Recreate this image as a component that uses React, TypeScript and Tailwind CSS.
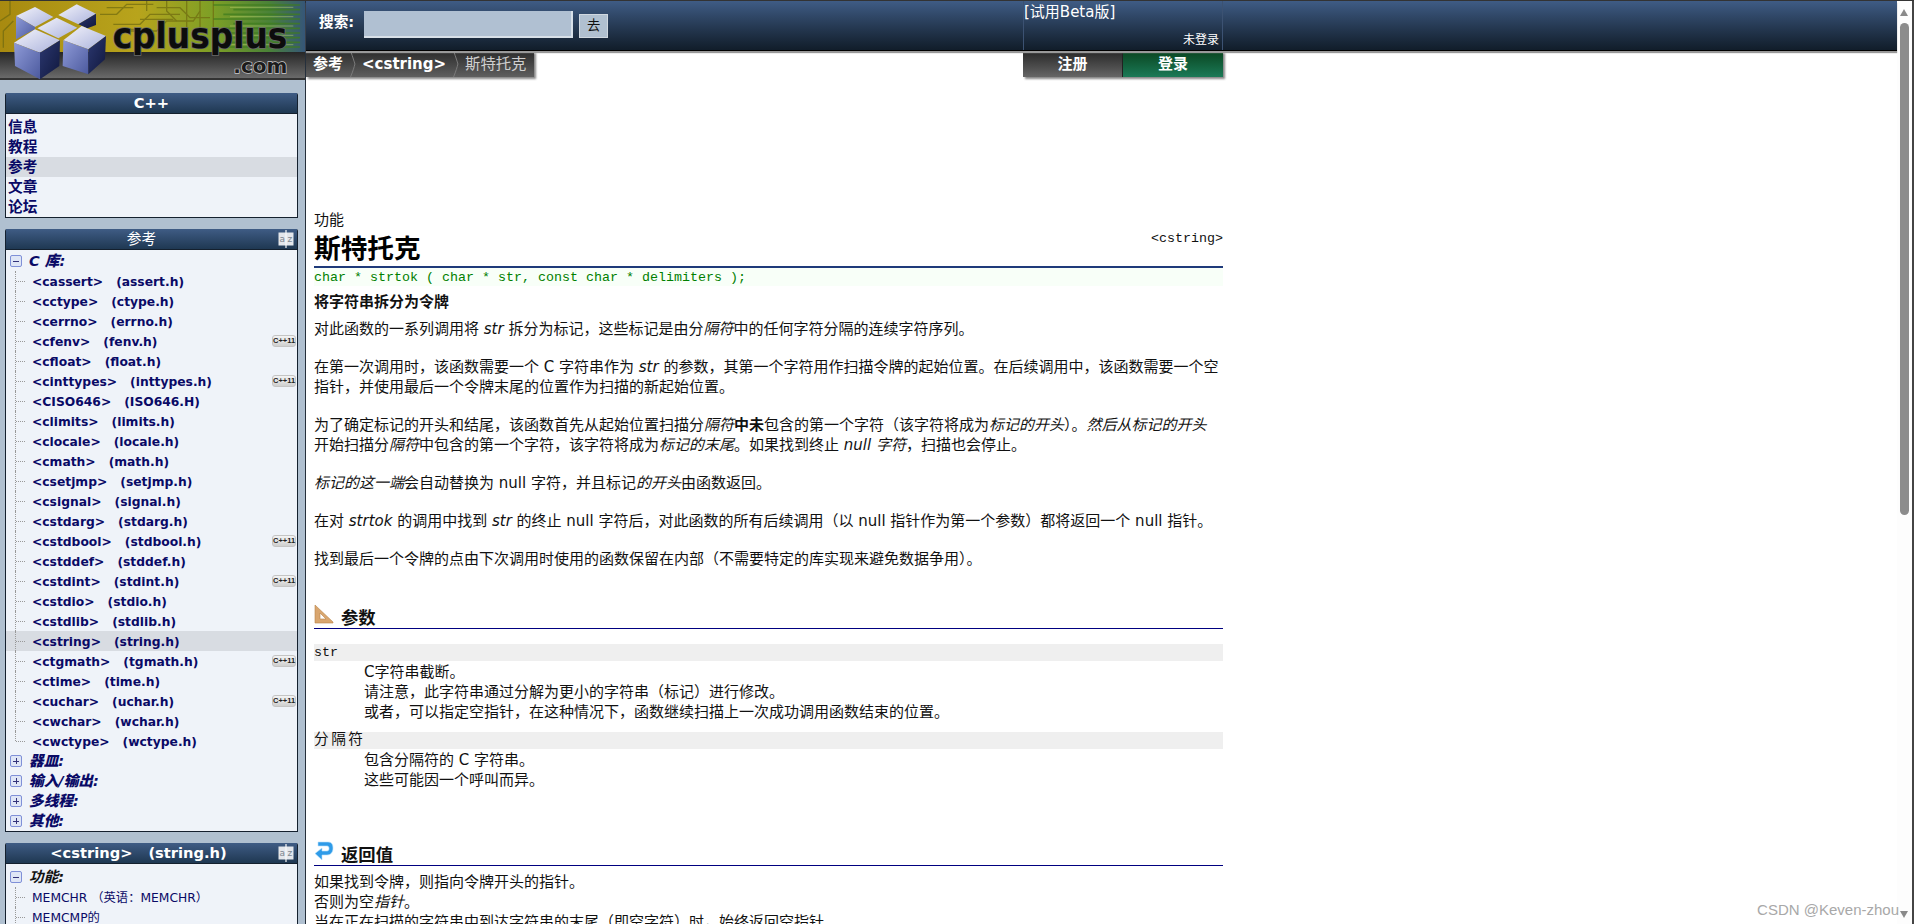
import React from "react";

const cjk = "font-['DejaVu_Sans','Noto_Sans_CJK_SC',sans-serif]";
const mono = "font-['Liberation_Mono','Noto_Sans_CJK_SC',monospace]";

const libs: [string, string, boolean?][] = [
  ["<cassert>", "(assert.h)"],
  ["<cctype>", "(ctype.h)"],
  ["<cerrno>", "(errno.h)"],
  ["<cfenv>", "(fenv.h)", true],
  ["<cfloat>", "(float.h)"],
  ["<cinttypes>", "(inttypes.h)", true],
  ["<CISO646>", "(ISO646.H)"],
  ["<climits>", "(limits.h)"],
  ["<clocale>", "(locale.h)"],
  ["<cmath>", "(math.h)"],
  ["<csetjmp>", "(setjmp.h)"],
  ["<csignal>", "(signal.h)"],
  ["<cstdarg>", "(stdarg.h)"],
  ["<cstdbool>", "(stdbool.h)", true],
  ["<cstddef>", "(stddef.h)"],
  ["<cstdint>", "(stdint.h)", true],
  ["<cstdio>", "(stdio.h)"],
  ["<cstdlib>", "(stdlib.h)"],
  ["<cstring>", "(string.h)"],
  ["<ctgmath>", "(tgmath.h)", true],
  ["<ctime>", "(time.h)"],
  ["<cuchar>", "(uchar.h)", true],
  ["<cwchar>", "(wchar.h)"],
  ["<cwctype>", "(wctype.h)"],
];

const LogoArt = () => (
  <svg viewBox="0 0 918 237" className="block w-[306px] h-[79px]">
    <defs>
      <linearGradient id="pcb" x1="0" x2="1" y1="0" y2="0">
        <stop offset="0" stopColor="#a88a10" />
        <stop offset="0.45" stopColor="#b8a41c" />
        <stop offset="0.7" stopColor="#7c9f26" />
        <stop offset="0.88" stopColor="#4a8238" />
        <stop offset="1" stopColor="#35557a" />
      </linearGradient>
      <linearGradient id="bar" x1="0" x2="0" y1="0" y2="1">
        <stop offset="0" stopColor="#262626" />
        <stop offset="1" stopColor="#6a6a6a" />
      </linearGradient>
      <linearGradient id="top" x1="0" x2="1" y1="0" y2="1">
        <stop offset="0" stopColor="#f4f4fb" />
        <stop offset="1" stopColor="#aab2dc" />
      </linearGradient>
      <linearGradient id="left" x1="0" x2="1" y1="0" y2="1">
        <stop offset="0" stopColor="#8f9bd8" />
        <stop offset="1" stopColor="#4c5a9e" />
      </linearGradient>
      <linearGradient id="right" x1="0" x2="1" y1="0" y2="1">
        <stop offset="0" stopColor="#2c3870" />
        <stop offset="1" stopColor="#10183e" />
      </linearGradient>
    </defs>
    <rect width="918" height="153" fill="url(#pcb)" />
    <g stroke="#6f6a10" strokeWidth="4" fill="none" opacity="0.7">
      <path d="M0 60 L30 40 L30 0 M10 140 L10 90 L40 60 M300 40 L350 40 L380 10 L460 10" />
      <path d="M340 70 L420 70 L450 40 L540 40 M380 90 L470 90 L500 60 L580 60 L600 30" />
      <path d="M440 0 L440 30 M500 0 L500 30 L530 60 M560 0 L560 80 M600 0 L600 90 M640 0 L640 90" />
      <path d="M320 20 L400 20 M420 55 L520 55 M470 20 L540 20 L570 50 L630 50 M350 85 L420 85" />
    </g>
    <g stroke="#3f7d1e" strokeWidth="5" opacity="0.75">
      {[12, 26, 40, 54, 68, 82, 96, 110, 124, 138].map((y) => (
        <line key={y} x1={640 + (y % 3) * 30} x2="900" y1={y} y2={y} />
      ))}
    </g>
    <g stroke="#c8dc70" strokeWidth="3" opacity="0.45">
      {[19, 47, 75, 103, 131].map((y) => (
        <line key={y} x1="690" x2="880" y1={y} y2={y} />
      ))}
    </g>
    <rect y="153" width="918" height="78" fill="url(#bar)" />
    <rect y="231" width="918" height="6" fill="#333" />

    <polygon points="48,45 105,18 160,48 105,78" fill="url(#top)" />
    <polygon points="48,45 105,78 105,85 48,115" fill="url(#left)" />
    <polygon points="175,42 230,10 288,38 235,70" fill="url(#top)" />
    <polygon points="288,38 235,70 262,82 288,72" fill="url(#right)" />
    <polygon points="112,82 170,50 232,80 175,112" fill="url(#top)" />
    <polygon points="42,125 105,85 180,118 120,155" fill="url(#top)" />
    <polygon points="42,125 120,155 120,235 45,195" fill="url(#left)" />
    <polygon points="120,155 180,118 178,195 120,235" fill="url(#right)" />
    <polygon points="190,118 245,75 318,105 265,145" fill="url(#top)" />
    <polygon points="190,118 265,145 265,220 188,195" fill="url(#left)" />
    <polygon points="265,145 318,105 315,175 265,220" fill="url(#right)" />

    <text
      x="338"
      y="142"
      textLength="524"
      lengthAdjust="spacingAndGlyphs"
      fontFamily="'DejaVu Sans', sans-serif"
      fontWeight="700"
      fontSize="104"
      fill="#0c0c0c"
      stroke="#6a6a6a"
      strokeWidth="5"
      paintOrder="stroke"
    >
      cplusplus
    </text>
    <text
      x="700"
      y="215"
      textLength="162"
      lengthAdjust="spacingAndGlyphs"
      fontFamily="'DejaVu Sans', sans-serif"
      fontWeight="700"
      fontSize="58"
      fill="#1c1c1c"
      stroke="#c8c8c8"
      strokeWidth="4"
      paintOrder="stroke"
    >
      .com
    </text>
  </svg>
);

const BookIcon = () => (
  <svg viewBox="0 0 16 18" className="w-4 h-[18px] absolute right-[3px] top-[1px]">
    <rect x="0.5" y="2.5" width="15" height="13" fill="#e4e7ec" />
    <rect x="7.4" y="0" width="1.2" height="18" fill="#f8f9fa" />
    <text x="1.500" y="12" fontSize="9" fill="#7c8690" fontFamily="'DejaVu Sans', sans-serif">
      a
    </text>
    <text x="9.500" y="12" fontSize="9" fill="#7c8690" fontFamily="'DejaVu Sans', sans-serif">
      z
    </text>
  </svg>
);

const Badge = () => (
  <span className="absolute right-[1px] top-[4px] w-[24px] h-[12px] rounded-[3px] bg-gradient-to-b from-[#f4f4f4] to-[#cfcfcf] border border-[#c4c4c4] text-[#222] text-[7.5px] leading-[10px] text-center font-bold font-['Liberation_Sans',sans-serif]">
    C++11
  </span>
);

const Toggle = ({ open }: { open?: boolean }) => (
  <span className="relative block w-[12px] h-[12px] shrink-0 border border-[#7f90d8] rounded-[2px] bg-[#dfe6f6]">
    <span className="absolute left-[2px] top-[4.500px] w-[6px] h-px bg-[#33337a]" />
    {!open && <span className="absolute left-[4.500px] top-[2px] w-px h-[6px] bg-[#33337a]" />}
  </span>
);

const PanelHead = ({ children, icon }: { children: React.ReactNode; icon?: boolean }) => (
  <div
    className={`relative h-[21px] flex items-center justify-center text-white text-[14.67px] bg-gradient-to-b from-[#3f5c85] to-[#1f3852] border-b border-[#14202e] ${
      icon ? "pr-[20px]" : ""
    }`}
  >
    {children}
    {icon && <BookIcon />}
  </div>
);

const Group = ({ label, open, black }: { label: string; open?: boolean; black?: boolean }) => (
  <div className="h-5 flex items-center pl-[4px] gap-[7px]">
    <Toggle open={open} />
    <b className={`italic text-[14.67px] ${black ? "text-[#111]" : "text-[#0a0a66]"}`}>{label}</b>
  </div>
);

const Leaf = ({
  children,
  last,
  active,
  badge,
}: {
  children: React.ReactNode;
  last?: boolean;
  active?: boolean;
  badge?: boolean;
}) => (
  <div
    className={`relative h-5 pt-[2px] flex items-center pl-[26px] text-[#0a0a66] text-[12.3px] whitespace-nowrap ${
      active ? "bg-[#d8dce2]" : ""
    }`}
  >
    <span
      className={`absolute left-[9px] top-0 w-0 border-l border-dotted border-[#999] ${
        last ? "h-[10px]" : "h-5"
      }`}
    />
    <span className="absolute left-[10px] top-[10px] w-[9px] border-t border-dotted border-[#999]" />
    {children}
    {badge && <Badge />}
  </div>
);

const SectionHead = ({ icon, title }: { icon: React.ReactNode; title: string }) => (
  <div className="h-[25px] pt-[3px] flex items-center gap-[7px] border-b border-[#000080] font-bold text-[17.33px] text-[#111]">
    {icon}
    {title}
  </div>
);

const RulerIcon = () => (
  <svg viewBox="0 0 20 20" className="w-5 h-5 -mt-2">
    <path d="M1 1 L19 18 L19 19 L1 19 Z M6 9 L6 15 L12 15 Z" fillRule="evenodd" fill="#d9a66f" stroke="#b88448" strokeWidth="0.6" />
  </svg>
);

const ReturnIcon = () => (
  <svg viewBox="0 0 20 20" className="w-5 h-5 -mt-2">
    <path
      d="M4 1 L14 1 C18 1 19 4 19 7 C19 11 17 14 13 14 L8 14 L8 19 L1 12.5 L8 7 L8 10 L13 10 C14.500 10 15 9 15 7.500 C15 6 14.500 5 13 5 L4 5 Z"
      fill="#2f9be8"
      stroke="#b8e0fa"
      strokeWidth="0.6"
    />
  </svg>
);

const Crumb = () => (
  <svg viewBox="0 0 6 27" className="w-[6px] h-[26px] shrink-0">
    <path d="M0.500 0 Q4 10 5 13.500 Q4 18 0.500 27" fill="none" stroke="#7c7c7c" />
  </svg>
);

export default function App() {
  return (
    <div className={`relative w-full h-[924px] overflow-hidden flex bg-white border-t border-[#333] ${cjk}`}>
      {/* left column */}
      <aside className="w-[306px] shrink-0 bg-[#b0c0d0] border-r border-[#26303c] overflow-hidden">
        <LogoArt />
        <div className="pl-[5px] pt-[13px] w-[298px] flex flex-col gap-[11px]">
          <section className="bg-[#eff3f9] border-x border-b border-[#14202e] rounded-t-[2px]">
            <PanelHead>
              <b>C++</b>
            </PanelHead>
            <div className="pt-[3px] font-bold text-[14.67px] text-[#0a0a66] [&>div]:h-5 [&>div]:leading-5 [&>div]:pl-[2px]">
              <div>信息</div>
              <div>教程</div>
              <div className="bg-[#d8dce2]">参考</div>
              <div>文章</div>
              <div>论坛</div>
            </div>
          </section>

          <section className="bg-[#eff3f9] border-x border-b border-[#14202e] rounded-t-[2px]">
            <PanelHead icon>参考</PanelHead>
            <div className="pt-[1px] font-bold">
              <Group label="C 库:" open />
              {libs.map(([h, c, badge], i) => (
                <Leaf key={h} last={i === libs.length - 1} active={h === "<cstring>"} badge={badge}>
                  {h}
                  <span className="ml-[13px]">{c}</span>
                </Leaf>
              ))}
              <Group label="器皿:" />
              <Group label="输入/输出:" />
              <Group label="多线程:" />
              <Group label="其他:" />
            </div>
          </section>

          <section className="bg-[#eff3f9] border-x border-[#14202e] rounded-t-[2px]">
            <PanelHead icon>
              <b className="mr-[6px]">
                {"<cstring>"}
                <span className="ml-[16px]">(string.h)</span>
              </b>
            </PanelHead>
            <div className="pt-[3px]">
              <Group label="功能:" open black />
              <Leaf>MEMCHR （英语：MEMCHR）</Leaf>
              <Leaf>MEMCMP的</Leaf>
              <Leaf>MEMCPY</Leaf>
            </div>
          </section>
        </div>
      </aside>

      {/* right column */}
      <main className="flex-1 min-w-0 flex flex-col">
        <header className="relative z-10 h-[50px] shrink-0 bg-gradient-to-b from-[#3f5c85] to-[#111d2a] border-b border-black shadow-[0_2px_1px_#999]">
          <div className="w-[917px] h-full flex">
            <b className="ml-[13px] mt-[11px] text-white text-[14.67px] leading-5">搜索:</b>
            <span className="ml-[10px] mt-[10px] w-[209px] h-[27px] bg-[#b0c0d2] border-b-2 border-r-2 border-[#d8e0e8]" />
            <span className="ml-[6px] mt-[13px] w-[29px] h-[24px] bg-[#b0c0d0] border border-[#d0d8e0] text-center text-[13.33px] leading-[22px] text-[#111]">
              去
            </span>
            <div className="ml-auto w-[200px] h-full border-x border-[#3c5272] flex flex-col justify-between text-white">
              <span className="text-[15px] leading-5 mt-[1px]">[试用Beta版]</span>
              <span className="pr-[3px] pb-[2px] text-right text-[12px] leading-4">未登录</span>
            </div>
          </div>
        </header>

        <div className="w-[917px] h-[27px] shrink-0 flex justify-between">
          <nav className="h-[26px] flex items-stretch pl-[7px] pr-[8px] bg-gradient-to-b from-[#2c2c2c] to-[#5f5f5f] shadow-[2px_2px_2px_#888] text-[15px] font-bold whitespace-nowrap">
            <span className="flex items-center text-white">参考</span>
            <span className="ml-[7px] mr-[6px] flex"><Crumb /></span>
            <span className="flex items-center text-white">{"<cstring>"}</span>
            <span className="ml-[7px] mr-[6px] flex"><Crumb /></span>
            <span className="flex items-center text-[#cfcfcf] font-normal text-[15.33px]">斯特托克</span>
          </nav>
          <div className="flex h-[26px] font-bold text-[15px] text-white shadow-[2px_2px_2px_#888]">
            <span className="w-[100px] flex items-center justify-center bg-gradient-to-b from-[#282828] to-[#666] border-r border-[#222]">
              注册
            </span>
            <span className="w-[100px] flex items-center justify-center bg-gradient-to-b from-[#0a4520] to-[#1b7a57]">
              登录
            </span>
          </div>
        </div>

        <div className="ml-[8px] w-[909px] pt-[132px] text-[15px] leading-5 text-[#111] whitespace-nowrap">
          <div className="h-5">功能</div>
          <div className="h-[38px] flex justify-between items-start border-b-2 border-[#1f3a7a]">
            <h1 className="text-[26.67px] leading-[37px] font-bold text-black">斯特托克</h1>
            <span className={`${mono} text-[13.33px] leading-[18px]`}>{"<cstring>"}</span>
          </div>
          <div className={`h-[18px] leading-[20px] bg-[#f8fff8] text-[#008000] text-[13.33px] ${mono}`}>
            {"char * strtok ( char * str, const char * delimiters );"}
          </div>
          <div className="mt-[6px] font-bold">将字符串拆分为令牌</div>

          <p className="mt-[7px]">
            对此函数的一系列调用将 <i>str</i> 拆分为标记，这些标记是由分<i>隔符</i>中的任何字符分隔的连续字符序列。
          </p>
          <p className="mt-[18px]">
            在第一次调用时，该函数需要一个 C 字符串作为 <i>str</i> 的参数，其第一个字符用作扫描令牌的起始位置。在后续调用中，该函数需要一个空
            <br />
            指针，并使用最后一个令牌末尾的位置作为扫描的新起始位置。
          </p>
          <p className="mt-[18px]">
            为了确定标记的开头和结尾，该函数首先从起始位置扫描分<i>隔符</i>
            <b>中未</b>包含的第一个字符（该字符将成为<i>标记的开头</i>）。<i>然后从标记的开头</i>
            <br />
            开始扫描分<i>隔符</i>中包含的第一个字符，该字符将成为<i>标记的末尾</i>。如果找到终止 <i>null 字符</i>，扫描也会停止。
          </p>
          <p className="mt-[18px]">
            <i>标记的这一端</i>会自动替换为 null 字符，并且标记<i>的开头</i>由函数返回。
          </p>
          <p className="mt-[18px]">
            在对 <i>strtok</i> 的调用中找到 <i>str</i> 的终止 null 字符后，对此函数的所有后续调用（以 null 指针作为第一个参数）都将返回一个 null 指针。
          </p>
          <p className="mt-[18px]">
            找到最后一个令牌的点由下次调用时使用的函数保留在内部（不需要特定的库实现来避免数据争用）。
          </p>

          <div className="mt-[35px]">
            <SectionHead icon={<RulerIcon />} title="参数" />
          </div>
          <div className={`mt-[15px] h-[17px] leading-[17px] bg-[#efefef] text-[13.33px] ${mono}`}>str</div>
          <div className="pl-[50px] pt-px">
            <div>C字符串截断。</div>
            <div>请注意，此字符串通过分解为更小的字符串（标记）进行修改。</div>
            <div>或者，可以指定空指针，在这种情况下，函数继续扫描上一次成功调用函数结束的位置。</div>
          </div>
          <div className={`mt-[10px] h-[17px] leading-[17px] bg-[#efefef] text-[14.67px] tracking-[2.500px] ${mono}`}>分隔符</div>
          <div className="pl-[50px] pt-px">
            <div>包含分隔符的 C 字符串。</div>
            <div>这些可能因一个呼叫而异。</div>
          </div>

          <div className="mt-[51px]">
            <SectionHead icon={<ReturnIcon />} title="返回值" />
          </div>
          <div className="mt-[6px]">如果找到令牌，则指向令牌开头的指针。</div>
          <div>
            否则为空<i>指针</i>。
          </div>
          <div>当在正在扫描的字符串中到达字符串的末尾（即空字符）时，始终返回空指针。</div>
        </div>
      </main>

      {/* scrollbar */}
      <div className="w-[17px] shrink-0 bg-[#fdfdfd] border-r-2 border-[#444] flex flex-col items-start pl-[3px]">
        <span className="mt-[8px] w-0 h-0 border-x-[4.5px] border-x-transparent border-b-[7px] border-b-[#8a8a8a]" />
        <span className="mt-[7px] w-[9px] h-[492px] rounded-[5px] bg-[#8c8c8c]" />
        <span className="mt-auto mb-[6px] w-0 h-0 border-x-[4.5px] border-x-transparent border-t-[7px] border-t-[#8a8a8a]" />
      </div>

      <span className="absolute right-[15px] bottom-[6px] text-[15px] leading-4 text-[#a8a8a8] font-['Liberation_Sans',sans-serif]">
        CSDN @Keven-zhou
      </span>
    </div>
  );
}
